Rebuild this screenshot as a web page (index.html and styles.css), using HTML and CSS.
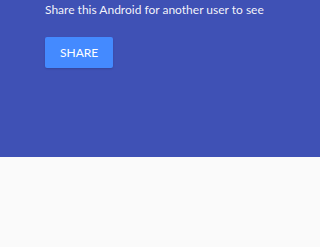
FILE: index.html
```html
<!DOCTYPE html>
<html>
<head>
<meta charset="utf-8">
<link rel="stylesheet" href="styles.css">
</head>
<body>
<section class="hero">
  <p class="hero-text">Share this Android for another user to see</p>
  <button class="share-btn">SHARE</button>
</section>
<section class="content"></section>
</body>
</html>
```
FILE: styles.css
```css
html, body {
  margin: 0;
  padding: 0;
}
body {
  background: #fafafa;
  font-family: Lato, "Open Sans", sans-serif;
  overflow: hidden;
}
.hero {
  background: #3f51b5;
  height: 157px;
  padding-left: 45px;
  box-sizing: border-box;
  display: flex;
  flex-direction: column;
  align-items: flex-start;
}
.hero-text {
  margin: 0;
  font-size: 12px;
  line-height: 20px;
  color: rgba(255, 255, 255, 0.95);
}
.share-btn {
  margin-top: 17px;
  height: 31px;
  padding: 0 15px;
  border: none;
  border-radius: 2px;
  background: #448aff;
  color: #fff;
  font-family: Lato, sans-serif;
  font-size: 12px;
  box-shadow: 0 1px 2px rgba(0, 0, 0, 0.15);
}
.content {
  height: 90px;
}
```
